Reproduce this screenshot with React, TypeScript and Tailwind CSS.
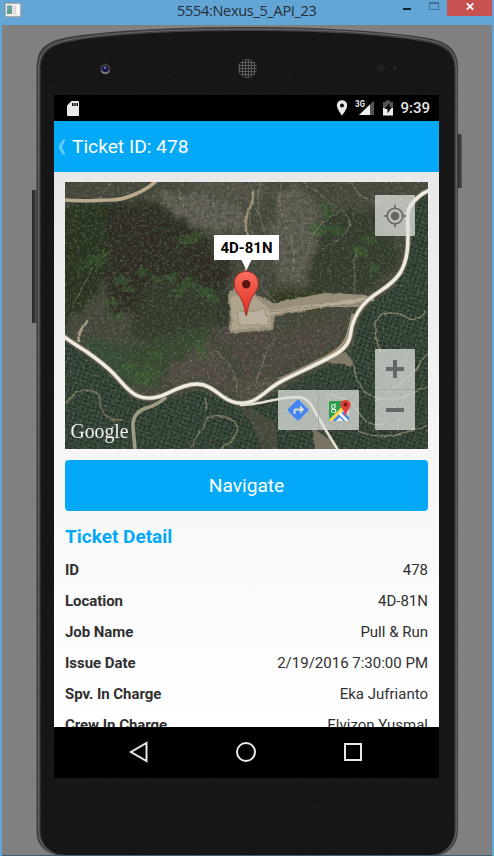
import React from "react";

const MAIN_ROAD =
  "M62 335 C72 343 80 347 87 352 S104 364 113 373 S128 392 138 396 S158 398 168 393 S187 384 197 384 S214 390 222 396 S240 405 250 402 S266 390 280 382 S326 361 339 352 S350 333 352 326 S358 309 368 300 S392 286 400 273 S408 245 408 232 S406 212 411 205 S422 193 430 190";

const RIGHT_PLANTATION =
  "M428 192 L414 204 L411 245 L404 272 L392 290 L368 306 L360 318 L353 346 L345 358 L310 374 L262 401 L244 407 L275 421 L278 449 L428 449 Z";

const LEFT_PLANTATION =
  "M65 342 L92 361 L112 378 L131 398 L150 403 L198 390 L214 396 L236 406 L250 420 L262 449 L65 449 Z";

const SCRUB = [
  [82, 268, 3], [95, 262, 5], [104, 255, 4], [121, 281, 5], [142, 272, 4], [186, 241, 5], [196, 236, 4], [189, 284, 6],
  [205, 292, 5], [151, 372, 6], [138, 379, 5], [128, 367, 4], [199, 347, 5], [203, 354, 4], [156, 355, 4], [318, 230, 6],
  [329, 216, 4], [360, 251, 5], [373, 269, 4], [335, 230, 5], [326, 208, 4], [155, 279, 4], [112, 303, 5], [170, 278, 5],
  [128, 290, 4], [180, 292, 4], [212, 298, 4], [146, 382, 4], [118, 316, 4], [370, 240, 4],
];

const ROWS: [string, string][] = [
  ["ID", "478"],
  ["Location", "4D-81N"],
  ["Job Name", "Pull & Run"],
  ["Issue Date", "2/19/2016 7:30:00 PM"],
  ["Spv. In Charge", "Eka Jufrianto"],
  ["Crew In Charge", "Elvizon Yusmal"],
];

function TitleBar() {
  return (
    <header className="relative flex h-[25px] w-full shrink-0 items-start bg-[#63a5d5] pl-[5px]">
      <svg className="mt-[3px] h-[14px] w-[16px] shrink-0" viewBox="0 0 16 14">
        <rect x=".5" y=".5" width="15" height="13" rx="1" fill="#f3eee9" stroke="#b3aaa4" />
        <rect x="2" y="2.5" width="5" height="8.5" fill="#55a483" />
        <path d="M2 3h5v3L2 8z" fill="#709cae" />
        <rect x="8" y="2.5" width="3" height="9" fill="#ddd9dc" />
        <rect x="12" y="2.5" width="2" height="8" fill="#fff" />
      </svg>
      <div className="min-w-0 flex-1 pl-[156px] pt-px font-['Open_Sans',sans-serif] text-[14.5px] leading-[20px] tracking-[-0.3px] whitespace-nowrap text-[#222d36]">
        5554:Nexus_5_API_23
      </div>
      <svg className="h-[16px] w-[91px] shrink-0" viewBox="0 0 91 16">
        <rect x="0" y="8" width="8" height="2" fill="#17232d" />
        <rect x="26.5" y="2.5" width="9" height="7" fill="none" stroke="#41719a" />
        <rect x="26" y="2" width="10" height="2" fill="#41719a" />
        <rect x="44" y="0" width="45" height="16" fill="#c75050" />
        <path d="M63.8 3.3l6.4 6.4M70.2 3.3l-6.4 6.4" stroke="#fff" strokeWidth="1.8" />
      </svg>
    </header>
  );
}

function PhoneFrame() {
  const body =
    "M36.5 832 V69 C36.5 50 44 42 66 37.5 C105 30.5 175 27 247 27 C320 27 385 31 428 38 C449 42 458 50 458 69 V829 C458 846 447 856 431 856 H65 C49 856 36.5 847 36.5 832Z";
  return (
    <svg className="absolute inset-y-0 -left-[2px] h-[856px] w-[494px]" viewBox="0 0 494 856">
      <defs>
        <linearGradient id="key" x1="0" x2="1">
          <stop offset="0" stopColor="#222" />
          <stop offset="1" stopColor="#555" />
        </linearGradient>
        <pattern id="mesh" width="3" height="3" patternUnits="userSpaceOnUse">
          <rect width="3" height="3" fill="#5a5a5a" />
          <rect width="2" height="2" fill="#1c1c1c" />
        </pattern>
        <filter id="grain" x="0" y="0" width="100%" height="100%">
          <feTurbulence type="fractalNoise" baseFrequency=".7" numOctaves="2" seed="4" />
          <feColorMatrix values="0 0 0 0 .5  0 0 0 0 .5  0 0 0 0 .5  0 0 0 .16 -.03" />
          <feComposite in2="SourceGraphic" operator="in" />
        </filter>
      </defs>
      <rect x="32" y="190" width="5" height="133" rx="1" fill="url(#key)" />
      <rect x="457.5" y="134" width="4.5" height="54" rx="1" fill="url(#key)" />
      <path d={body} fill="#3b3b3c" />
      <path
        d="M38.7 831 V69 C38.7 52 47 44 67 40 C105 32.5 175 29 247 29 C320 29 385 32.5 427 40 C448 44 456.3 52 456.3 69 V829 C456.3 844 446 854.5 431 854.5 H65 C49 854.5 38.7 846 38.7 831Z"
        fill="#3f3f40"
        stroke="#69696a"
        strokeWidth="1"
      />
      <path
        d="M40.5 830 V70 C40.5 54 48 46 68 42 C105 34.5 175 31 247 31 C320 31 385 34.5 426 42 C447 46 454.5 54 454.5 70 V829 C454.5 844 444 855 431 855 H65 C50 855 40.5 844 40.5 830Z"
        fill="#141414"
      />
      <path d={body} fill="#fff" filter="url(#grain)" opacity=".35" />
      <circle cx="105.3" cy="69" r="5.2" fill="#3d3d3f" />
      <path d="M101.5 71.2a4.6 4.6 0 0 0 7.8-.2" fill="none" stroke="#8d8d8d" strokeWidth="1.3" />
      <circle cx="105.3" cy="69" r="3" fill="#171755" />
      <circle cx="105" cy="67.7" r="1" fill="#8790cc" />
      <circle cx="247.5" cy="68.5" r="9.5" fill="url(#mesh)" />
      <circle cx="381" cy="68" r="4" fill="#202020" />
      <circle cx="395" cy="68" r="2.3" fill="#232323" />
      <rect x="0" y="855" width="494" height="1" fill="#3d5f7a" />
    </svg>
  );
}

function StatusBar() {
  return (
    <div className="flex h-[26px] shrink-0 items-center bg-black pr-[9px] pl-[13px] text-[#e8e8e8]">
      <svg className="h-[15px] w-[12px]" viewBox="0 0 12 15">
        <path d="M4.5 0H11q1 0 1 1v13q0 1-1 1H1q-1 0-1-1V4.5z" fill="#e8e8e8" />
        <path d="M5 2h1.4v3H5zM7.3 2h1.4v3H7.3zM9.6 2H11v3H9.6z" fill="#000" />
      </svg>
      <div className="flex-1" />
      <svg className="h-[16px] w-[60px] shrink-0" viewBox="336 100 60 16">
        <path d="M342 100.3c-3 0-5.1 2.2-5.1 5.1 0 3.8 5.1 10 5.1 10s5.1-6.2 5.1-10c0-2.9-2.1-5.1-5.1-5.1z" fill="#e8e8e8" />
        <circle cx="342" cy="105.5" r="1.9" fill="#000" />
        <path d="M374 100.5v14.5h-15z" fill="#555" />
        <path d="M370 104.4V115h-11z" fill="#eee" />
        <text x="355.3" y="106.9" className="font-['Roboto',sans-serif] text-[9px] font-bold" fill="#eee" textLength="9.5" lengthAdjust="spacingAndGlyphs">3G</text>
        <path d="M383 102h2.5v-1.5h5v1.5h2.5v6h-10z" fill="#555" />
        <path d="M383 108h10v7.5h-10z" fill="#eee" />
        <path d="M389.5 103l-5 6h3v4.3l4.5-6h-2.5z" fill="#000" />
      </svg>
      <span className="ml-[4px] pt-px font-['Roboto',sans-serif] text-[15px] leading-[25px] font-medium text-[#e5e5e5]">9:39</span>
    </div>
  );
}

function Terrain() {
  return (
    <svg className="block h-[267px] w-[363px]" viewBox="65 182 363 267">
      <defs>
        <filter id="rough" x="-5%" y="-5%" width="110%" height="110%">
          <feTurbulence type="fractalNoise" baseFrequency=".09" numOctaves="4" seed="12" result="n" />
          <feDisplacementMap in="SourceGraphic" in2="n" scale="20" xChannelSelector="R" yChannelSelector="G" />
          <feGaussianBlur stdDeviation="2.5" />
        </filter>
        <filter id="thin" x="-5%" y="-5%" width="110%" height="110%">
          <feTurbulence type="fractalNoise" baseFrequency=".12" numOctaves="3" seed="2" result="n" />
          <feDisplacementMap in="SourceGraphic" in2="n" scale="4" xChannelSelector="R" yChannelSelector="G" />
          <feGaussianBlur stdDeviation=".45" />
        </filter>
        <filter id="scrub" x="-5%" y="-5%" width="110%" height="110%">
          <feTurbulence type="fractalNoise" baseFrequency=".25" numOctaves="3" seed="9" result="n" />
          <feDisplacementMap in="SourceGraphic" in2="n" scale="16" xChannelSelector="R" yChannelSelector="G" />
          <feGaussianBlur stdDeviation=".7" />
        </filter>
        <filter id="dark" x="0" y="0" width="100%" height="100%">
          <feTurbulence type="fractalNoise" baseFrequency=".22" numOctaves="4" seed="7" />
          <feColorMatrix values="0 0 0 0 .04  0 0 0 0 .06  0 0 0 0 .04  0 0 4 0 -1.85" />
        </filter>
        <filter id="light" x="0" y="0" width="100%" height="100%">
          <feTurbulence type="fractalNoise" baseFrequency=".4" numOctaves="3" seed="23" />
          <feColorMatrix values="0 0 0 0 .65  0 0 0 0 .62  0 0 0 0 .54  0 0 3 0 -1.5" />
        </filter>
        <pattern id="palms" width="4.6" height="4.2" patternUnits="userSpaceOnUse" patternTransform="rotate(18)">
          <rect width="4.6" height="4.2" fill="#38463a" />
          <circle cx="2.5" cy="2.3" r="1.75" fill="#1c2d20" />
          <circle cx="1.8" cy="1.6" r=".7" fill="#3d573f" />
        </pattern>
        <clipPath id="leafL"><path d={LEFT_PLANTATION} /></clipPath>
      </defs>
      <rect x="65" y="182" width="363" height="267" fill="#46483b" />
      <g filter="url(#rough)">
        <path d="M60 205 L112 205 L118 265 L90 300 L60 330Z" fill="#27301f" />
        <path d="M110 205 L152 202 L200 230 L232 268 L225 300 L185 290 L150 320 L105 310Z" fill="#2d2b21" />
        <path d="M145 280 L230 290 L228 330 L205 350 L130 335Z" fill="#303829" />
        <path d="M80 338 L130 346 L145 385 L125 382 L95 355Z" fill="#354c31" />
        <path d="M120 350 L210 322 L217 360 L160 380 L145 385Z" fill="#38462f" />
        <path d="M150 195 L190 190 L243 210 L240 232 L205 230 L168 210Z" fill="#645f56" />
        <path d="M170 180 L270 180 L260 205 L220 200Z" fill="#55534a" />
        <path d="M278 190 L302 188 L322 205 L316 250 L300 284 L278 278 L270 235Z" fill="#5f5b51" />
        <path d="M322 210 L380 215 L402 260 L368 292 L304 294 L318 248Z" fill="#323b2a" />
        <path d="M175 360 L212 340 L235 382 L238 396 L200 378 L160 388Z" fill="#544c45" />
        <path d="M212 330 L345 320 L340 346 L265 383 L246 382 L230 350Z" fill="#504740" />
        <path d="M245 380 L290 380 L262 397 L240 400Z" fill="#5a5145" />
        <path d="M268 292 L328 294 L328 306 L276 308Z" fill="#33371f" />
      </g>
      <g filter="url(#scrub)">
        {SCRUB.map(([x, y, r]) => (
          <ellipse key={`${x}-${y}`} cx={x} cy={y} rx={r * 1.7} ry={r} fill="#38602f" opacity=".55" />
        ))}
      </g>
      <g fill="none" stroke="#a39c88" strokeWidth="1" opacity=".6" filter="url(#thin)">
        <path d="M260 183 Q253 212 266 234M281 183 Q277 210 286 226 T294 270M302 182 Q329 199 345 214 T323 249M350 182 Q360 202 383 202" />
        <path d="M356 248 Q354 260 355 292M263 276 Q256 292 283 305M309 241 Q317 224 340 211M110 183 L98 200M182 183 Q173 199 189 207M250 202 Q249 223 252 235" />
        <path d="M93 267 Q84 285 73 305M275 337 Q265 351 255 385M215 351 Q237 367 238 394" />
      </g>
      <path d={RIGHT_PLANTATION} fill="url(#palms)" />
      <path d={LEFT_PLANTATION} fill="url(#palms)" />
      <rect x="65" y="182" width="363" height="267" filter="url(#dark)" opacity=".55" />
      <rect x="65" y="182" width="363" height="267" filter="url(#light)" opacity=".24" />
      <g fill="none" stroke="#918a70" strokeWidth="1.5" opacity=".75" filter="url(#thin)" clipPath="url(#leafL)">
        <path d="M65 404 Q74 390 87 390 T101 405 T122 420M190 449 L208 417 Q226 412 235 424 T220 449M205 397 L207 409" />
      </g>
      <g fill="none" stroke="#9b9478" strokeWidth="1.3" opacity=".8" filter="url(#thin)">
        <path d="M425 310 C424 322 406 319 402 315 C393 311 376 312 375 325 C374 338 379 344 381 354M428 350 Q412 382 386 392M353 362 C355 382 363 398 384 399 S410 393 428 387M325 394 C350 396 356 408 361 416 C366 426 378 425 384 424M358 431 Q375 439 398 434 T428 425" />
      </g>
      <g filter="url(#thin)">
        <path d="M229 292 L237 286 L252 292 L273 303 L325 293 L369 295 L362 307 L325 307 L275 316 L273 330 L230 333Z" fill="#998e78" />
        <path d="M231 297 L252 294 L270 310 L271 327 L232 330Z" fill="#aea38c" />
        <path d="M237 311 L266 309 L268 325 L239 325Z" fill="#b9b09d" stroke="#968b75" />
        <path d="M267 313 Q315 306 374 298" stroke="#b6ad98" strokeWidth="3.5" fill="none" />
        <path d="M270 312 Q315 305 361 304" stroke="#8d8575" strokeWidth="1" fill="none" />
        <path d="M78 342 Q79 329 89 320" stroke="#a39a82" strokeWidth="2.6" fill="none" />
        <path d="M253 190 Q254 200 249 210 T247 237 M247 262 L240 290" stroke="#9d8f75" strokeWidth="2.6" fill="none" />
        <path d="M319 361 L344 352 L353 360 L351 367 L336 363Z" fill="#807965" />
        <path d="M313 427 L326 437 L339 449 L314 449Z" fill="#777262" />
      </g>
      <path d="M65 200 C82 202 97 200 111 200 S146 191 156 181" fill="none" stroke="#b8aa8b" strokeWidth="3.6" />
      <path d="M166 397 Q158 405 146 408 Q132 413 133 427 L135 449" fill="none" stroke="#9e9b84" strokeWidth="3.6" />
      <path d="M280 380 C310 366 326 359 338 350 S350 326 354 314" fill="none" stroke="#a1947a" strokeWidth="4.5" />
      <path d={MAIN_ROAD} fill="none" stroke="#8f8770" strokeWidth="5.2" opacity=".8" />
      <path d={MAIN_ROAD} fill="none" stroke="#efebe1" strokeWidth="3.4" />
      <path d="M240 405 C263 405 275 397 299 397 Q308 398 313 408 Q326 431 338 450" fill="none" stroke="#e3ded0" strokeWidth="2.6" />
      <text x="70.5" y="438" textLength="58" lengthAdjust="spacingAndGlyphs" className="font-['Liberation_Serif',serif] text-[22px]" fill="#efefed" stroke="#404940" strokeWidth="1.2" paintOrder="stroke">Google</text>
    </svg>
  );
}

function MapMarker() {
  return (
    <div className="absolute top-[53px] left-[149px] flex w-[65px] flex-col items-center">
      <div className="flex h-[25px] w-full items-center justify-center bg-white pt-[2px] font-['Roboto',sans-serif] text-[15px] font-bold whitespace-nowrap text-black">4D-81N</div>
      <svg className="-mt-px mr-[2px] h-[58px] w-[28px]" viewBox="0 0 28 58">
        <defs>
          <linearGradient id="pin" x1="0" y1="0" x2="0" y2="1">
            <stop offset="0" stopColor="#fa6d5e" />
            <stop offset="1" stopColor="#df2e21" />
          </linearGradient>
        </defs>
        <path d="M9 0h11l-5.5 11z" fill="#fff" />
        <path d="M14.2 12.5C7 12.5 2.2 17.6 2.2 24.3c0 6.8 4.2 10 7.4 16.5 2.4 5 3.2 9.7 4.2 15.4h.8c1-5.7 1.8-10.4 4.2-15.4 3.2-6.5 7.4-9.7 7.4-16.5 0-6.7-4.8-11.8-12-11.8z" fill="url(#pin)" stroke="#9d2e26" />
        <circle cx="14.2" cy="25.2" r="4.2" fill="#591712" />
      </svg>
    </div>
  );
}

function MapControls() {
  return (
    <>
      <div className="absolute top-[13px] left-[310px] flex h-[41px] w-[40px] items-center justify-center rounded-[1px] bg-[#dfe3de]/75">
        <svg className="size-[24px]" viewBox="0 0 24 24" fill="none" stroke="#626561" strokeWidth="1.6">
          <circle cx="12" cy="12" r="7.8" />
          <circle cx="12" cy="12" r="4.2" fill="#626561" stroke="none" />
          <path d="M12 .8v4M12 19.2v4M.8 12h4M19.2 12h4" />
        </svg>
      </div>
      <div className="absolute top-[167px] left-[310px] flex h-[81px] w-[40px] flex-col rounded-[1px] bg-[#dfe3de]/75">
        <div className="flex h-[41px] items-center justify-center border-b border-[#a6aba6]">
          <svg className="size-[18px]" viewBox="0 0 18 18"><path d="M0 9h18M9 0v18" stroke="#656866" strokeWidth="4" /></svg>
        </div>
        <div className="flex flex-1 items-center justify-center">
          <svg className="h-[4px] w-[18px]" viewBox="0 0 18 4"><rect width="18" height="4" fill="#656866" /></svg>
        </div>
      </div>
      <div className="absolute top-[208px] left-[213px] flex h-[40px] w-[81px] rounded-[1px] bg-[#dfe3de]/75">
        <div className="flex w-[41px] items-center justify-center border-r border-[#a6aba6]">
          <svg className="size-[22px]" viewBox="0 0 22 22">
            <path d="M10 1Q11 0 12 1l9 9q1 1 0 2l-9 9q-1 1-2 0l-9-9q-1-1 0-2z" fill="#4385f3" />
            <path d="M7.5 15v-3.5q0-1 1-1H15" fill="none" stroke="#ddd9c7" strokeWidth="2" />
            <path d="M13 6.2l4.2 4.3-4.2 4.2z" fill="#ddd9c7" />
          </svg>
        </div>
        <div className="flex flex-1 items-center justify-center pl-px">
          <svg className="h-[23px] w-[24px]" viewBox="0 0 24 23">
            <defs><clipPath id="tile"><rect x="1" y="2" width="20" height="20" rx="1.2" /></clipPath></defs>
            <g clipPath="url(#tile)">
              <rect x="1" y="2" width="20" height="20" fill="#2f9d4c" />
              <path d="M11 12l10-10v20z" fill="#d5d7cf" />
              <path d="M3 22l9-9 9 9z" fill="#4486ee" />
              <path d="M2 22L18 6" stroke="#fbd84b" strokeWidth="3.2" />
              <path d="M11.5 14l9 9" stroke="#f5f6f2" strokeWidth="3" />
              <path d="M6 24l5.7-5.7L17.4 24z" fill="#e8ebe8" />
              <path d="M14.5 13.5l8 8" stroke="#4486ee" strokeWidth="2.4" />
            </g>
            <text x="2.6" y="10.6" className="font-['Liberation_Serif',serif] text-[12px]" fill="#fff">g</text>
            <path d="M17.5 1c-3 0-5 2-5 4.7 0 4 4 5.2 4.7 11.3h.7c.7-6.1 4.7-7.3 4.7-11.3C22.6 3 20.5 1 17.5 1z" fill="#e14237" />
            <circle cx="17.5" cy="5.4" r="2" fill="#781d18" />
          </svg>
        </div>
      </div>
    </>
  );
}

export default function App() {
  return (
    <div className="relative flex h-[856px] w-[494px] flex-col overflow-hidden border-x-2 border-[#63a5d5] bg-[#808080]">
      <PhoneFrame />
      <div className="-mx-[2px] w-[494px]"><TitleBar /></div>
      <main className="relative mt-[70px] ml-[52px] flex h-[683px] w-[385px] flex-col overflow-hidden bg-black">
        <StatusBar />
        <div className="flex h-[51px] shrink-0 items-center bg-[#03a9f7] pl-[4px] text-white">
          <svg className="mr-[6px] h-[16px] w-[8px]" viewBox="0 0 8 16"><path d="M4.5.5H7.5L4 8l3.5 7.5h-3L.5 8z" fill="#65c9fa" /></svg>
          <h1 className="pt-[2px] font-['Roboto',sans-serif] text-[19.2px] font-normal whitespace-nowrap">Ticket ID: 478</h1>
        </div>
        <section className="flex h-[555px] shrink-0 flex-col overflow-hidden bg-linear-to-b from-[#e8e8e8] via-[#f6f6f6] to-white px-[11px] pt-[10px] font-['Roboto',sans-serif] text-[#303030]">
          <div className="relative h-[267px] w-[363px] shrink-0 overflow-hidden">
            <Terrain />
            <MapMarker />
            <MapControls />
          </div>
          <button className="mt-[11px] h-[51px] w-full shrink-0 rounded-[4px] bg-[#03a9f7] pt-[2px] text-[19.2px] text-white">Navigate</button>
          <h2 className="mt-[10px] h-[33px] shrink-0 pt-px text-[19px] leading-[30px] font-bold text-[#03a9f7]">Ticket Detail</h2>
          <dl>
            {ROWS.map(([label, value]) => (
              <div key={label} className="flex h-[31px] items-center justify-between pt-[2px] text-[15px] whitespace-nowrap">
                <dt className="font-bold tracking-[-0.05px]">{label}</dt>
                <dd>{value}</dd>
              </div>
            ))}
          </dl>
        </section>
        <nav className="flex h-[51px] shrink-0 items-center justify-center gap-[86px] bg-black pr-px pb-px">
          <svg className="h-[22px] w-[20px]" viewBox="0 0 20 22"><path d="M17.5 2v18L2 11z" fill="none" stroke="#e8e8e8" strokeWidth="2" /></svg>
          <svg className="size-[22px]" viewBox="0 0 22 22"><circle cx="11" cy="11" r="9" fill="none" stroke="#e8e8e8" strokeWidth="2" /></svg>
          <svg className="size-[20px]" viewBox="0 0 20 20"><rect x="2" y="2" width="16" height="16" fill="none" stroke="#e8e8e8" strokeWidth="2" /></svg>
        </nav>
      </main>
    </div>
  );
}
